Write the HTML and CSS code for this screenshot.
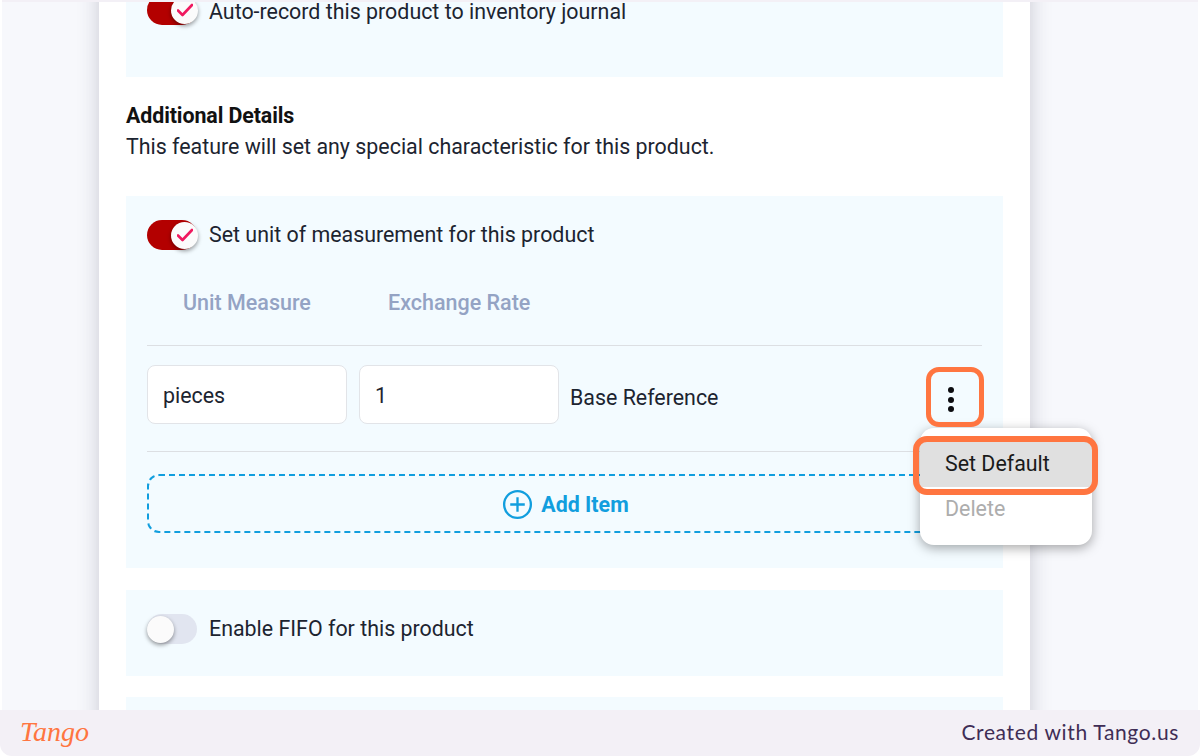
FILE: index.html
```html
<!DOCTYPE html>
<html lang="en">
<head>
<meta charset="utf-8">
<title>Product settings</title>
<link rel="stylesheet" href="styles.css">
</head>
<body>
<div class="frame">
  <main class="stage">
    <div class="card">
      <section class="panel panel-first">
        <div class="toggle-row">
          <span class="toggle on"><span class="thumb"><svg viewBox="0 0 16 16" class="check"><path d="M1 8.5 L5.5 13 L15 3"/></svg></span></span>
          <span class="toggle-label">Auto-record this product to inventory journal</span>
        </div>
      </section>

      <div class="details">
        <h2>Additional Details</h2>
        <p>This feature will set any special characteristic for this product.</p>
      </div>

      <section class="panel panel-units">
        <div class="toggle-row">
          <span class="toggle on"><span class="thumb"><svg viewBox="0 0 16 16" class="check"><path d="M1 8.5 L5.5 13 L15 3"/></svg></span></span>
          <span class="toggle-label">Set unit of measurement for this product</span>
        </div>
        <div class="table-head">
          <span class="col-unit">Unit Measure</span>
          <span>Exchange Rate</span>
        </div>
        <div class="unit-row">
          <div class="field">pieces</div>
          <div class="field">1</div>
          <span class="base">Base Reference</span>
          <button class="kebab" type="button" aria-label="More"><i></i><i></i><i></i></button>
        </div>
        <div class="add-item">
          <svg viewBox="0 0 32 32" class="plus"><circle cx="16" cy="16" r="13.8"/><path d="M16 8.5V23.5M8.5 16H23.5"/></svg>
          <span class="add-label">Add Item</span>
        </div>
        <div class="menu">
          <div class="menu-item active">Set Default</div>
          <div class="menu-item disabled">Delete</div>
        </div>
        <div class="mark mark-kebab"></div>
        <div class="mark mark-item"></div>
      </section>

      <section class="panel panel-fifo">
        <div class="toggle-row">
          <span class="toggle"><span class="thumb"></span></span>
          <span class="toggle-label">Enable FIFO for this product</span>
        </div>
      </section>

      <section class="panel panel-last"></section>
    </div>
  </main>
  <footer class="footer">
    <span class="logo">Tango</span>
    <span class="credit">Created with Tango.us</span>
  </footer>
</div>
</body>
</html>
```

FILE: styles.css
```css
* { box-sizing: border-box; }
html, body { margin: 0; height: 756px; overflow: hidden; background: #fff; }
body { font-family: Roboto, "Liberation Sans", sans-serif; color: #1c2430; font-size: 21.4px; }

.frame { height: 756px; display: flex; flex-direction: column; }

.stage {
  flex: 1;
  min-height: 0;
  margin: 0 2px;
  overflow: hidden;
  background: #f7f8fc;
  border-top: 2px solid #f3f0f6;
  padding-left: 97px;
}

.card {
  width: 931px;
  height: 900px;
  margin-top: -31px;
  padding: 0 27px;
  background: #fff;
  box-shadow: 0 0 20px rgba(60, 60, 80, 0.24);
}

.panel { background: #f3fbff; padding: 21px 21px 29px; position: relative; }
.panel-first { height: 106px; }
.panel-first .toggle-label { margin-top: 3px; }
.panel-units { height: 372px; }
.panel-fifo { height: 86px; margin-top: 22px; }
.panel-last { height: 80px; margin-top: 21px; }

.details { padding: 23px 0 34px; line-height: 31px; }
.details h2 { margin: 0; font-size: 21.4px; font-weight: 700; letter-spacing: -0.1px; color: #111; line-height: 31px; }
.details p { margin: 0; }

.toggle-row { display: flex; align-items: center; height: 36px; gap: 12px; }
.toggle-label { line-height: 16px; }

.toggle {
  width: 50px;
  height: 30px;
  border-radius: 15px;
  background: #e1e5f0;
  display: flex;
  align-items: center;
  flex: none;
}
.toggle.on { background: #b30000; justify-content: flex-end; }
.thumb {
  width: 27px;
  height: 27px;
  border-radius: 50%;
  background: #fbfbfb;
  box-shadow: 0 2px 4px rgba(0, 0, 0, 0.4);
  display: flex;
  align-items: center;
  justify-content: center;
}
.toggle.on .thumb { margin-right: -1px; }
.check { width: 16px; height: 16px; }
.check path { fill: none; stroke: #f0195f; stroke-width: 2.6; stroke-linecap: round; stroke-linejoin: round; }

.table-head {
  display: flex;
  margin-top: 26px;
  height: 47px;
  padding-left: 36px;
  align-items: center;
  font-size: 21.5px;
  font-weight: 500;
  color: #94a3c4;
}
.col-unit { width: 205px; }

.unit-row {
  display: flex;
  align-items: center;
  gap: 12px;
  height: 107px;
  margin-top: 19px;
  border-top: 1px solid #dcdfe3;
  border-bottom: 1px solid #dcdfe3;
}
.field {
  width: 200px;
  height: 59px;
  padding: 2px 15px 0;
  display: flex;
  align-items: center;
  background: #fff;
  border: 1px solid #e2e4e8;
  border-radius: 8px;
  margin-top: -9px;
}
.base { flex: 1; margin-top: -2px; margin-left: -1px; }
.kebab {
  width: 58px;
  height: 60px;
  margin: 2px 0 0 0;
  position: relative;
  left: -2px;
  padding: 0;
  border: 0;
  background: none;
  display: flex;
  flex-direction: column;
  align-items: center;
  justify-content: center;
  gap: 3.4px;
}
.kebab i { width: 6px; height: 6px; border-radius: 50%; background: #0c0c10; }

.add-item {
  height: 59px;
  margin-top: 22px;
  padding-left: 3px;
  border: 2px dashed #119ede;
  border-radius: 12px;
  display: flex;
  align-items: center;
  justify-content: center;
  gap: 8px;
  color: #119ede;
  font-weight: 700;
}
.add-label { margin-top: 2px; }
.plus { width: 31px; height: 31px; margin-left: -1px; margin-top: 2px; }
.plus circle, .plus path { fill: none; stroke: #119ede; stroke-width: 2.4; }

.menu {
  position: absolute;
  left: 794px;
  top: 232px;
  width: 172px;
  height: 117px;
  padding-top: 14px;
  background: #fff;
  border-radius: 14px;
  box-shadow: 0 3px 12px rgba(0, 0, 0, 0.35);
}
.menu-item { height: 45px; padding: 0 25px 2px; display: flex; align-items: center; }
.menu-item.active { background: #e0e0e0; color: #1a1a1a; }
.menu-item.disabled { color: #adadad; }

.mark { position: absolute; border: 5px solid #ff7540; border-radius: 13px; }
.mark-kebab { left: 800px; top: 171px; width: 58px; height: 60px; }
.mark-item { left: 787px; top: 240px; width: 185px; height: 59px; border-width: 6px; border-radius: 14px; }

.footer {
  height: 46px;
  flex: none;
  padding: 0 21px 3px 20px;
  background: #f3f0f6;
  border-radius: 0 0 12px 12px;
  display: flex;
  align-items: center;
  justify-content: space-between;
}
.logo {
  font-family: "Liberation Serif", serif;
  font-style: italic;
  font-size: 28px;
  color: #ff7540;
}
.credit { font-family: Lato, sans-serif; font-size: 21px; letter-spacing: 0.65px; color: #3f2d55; }
```
